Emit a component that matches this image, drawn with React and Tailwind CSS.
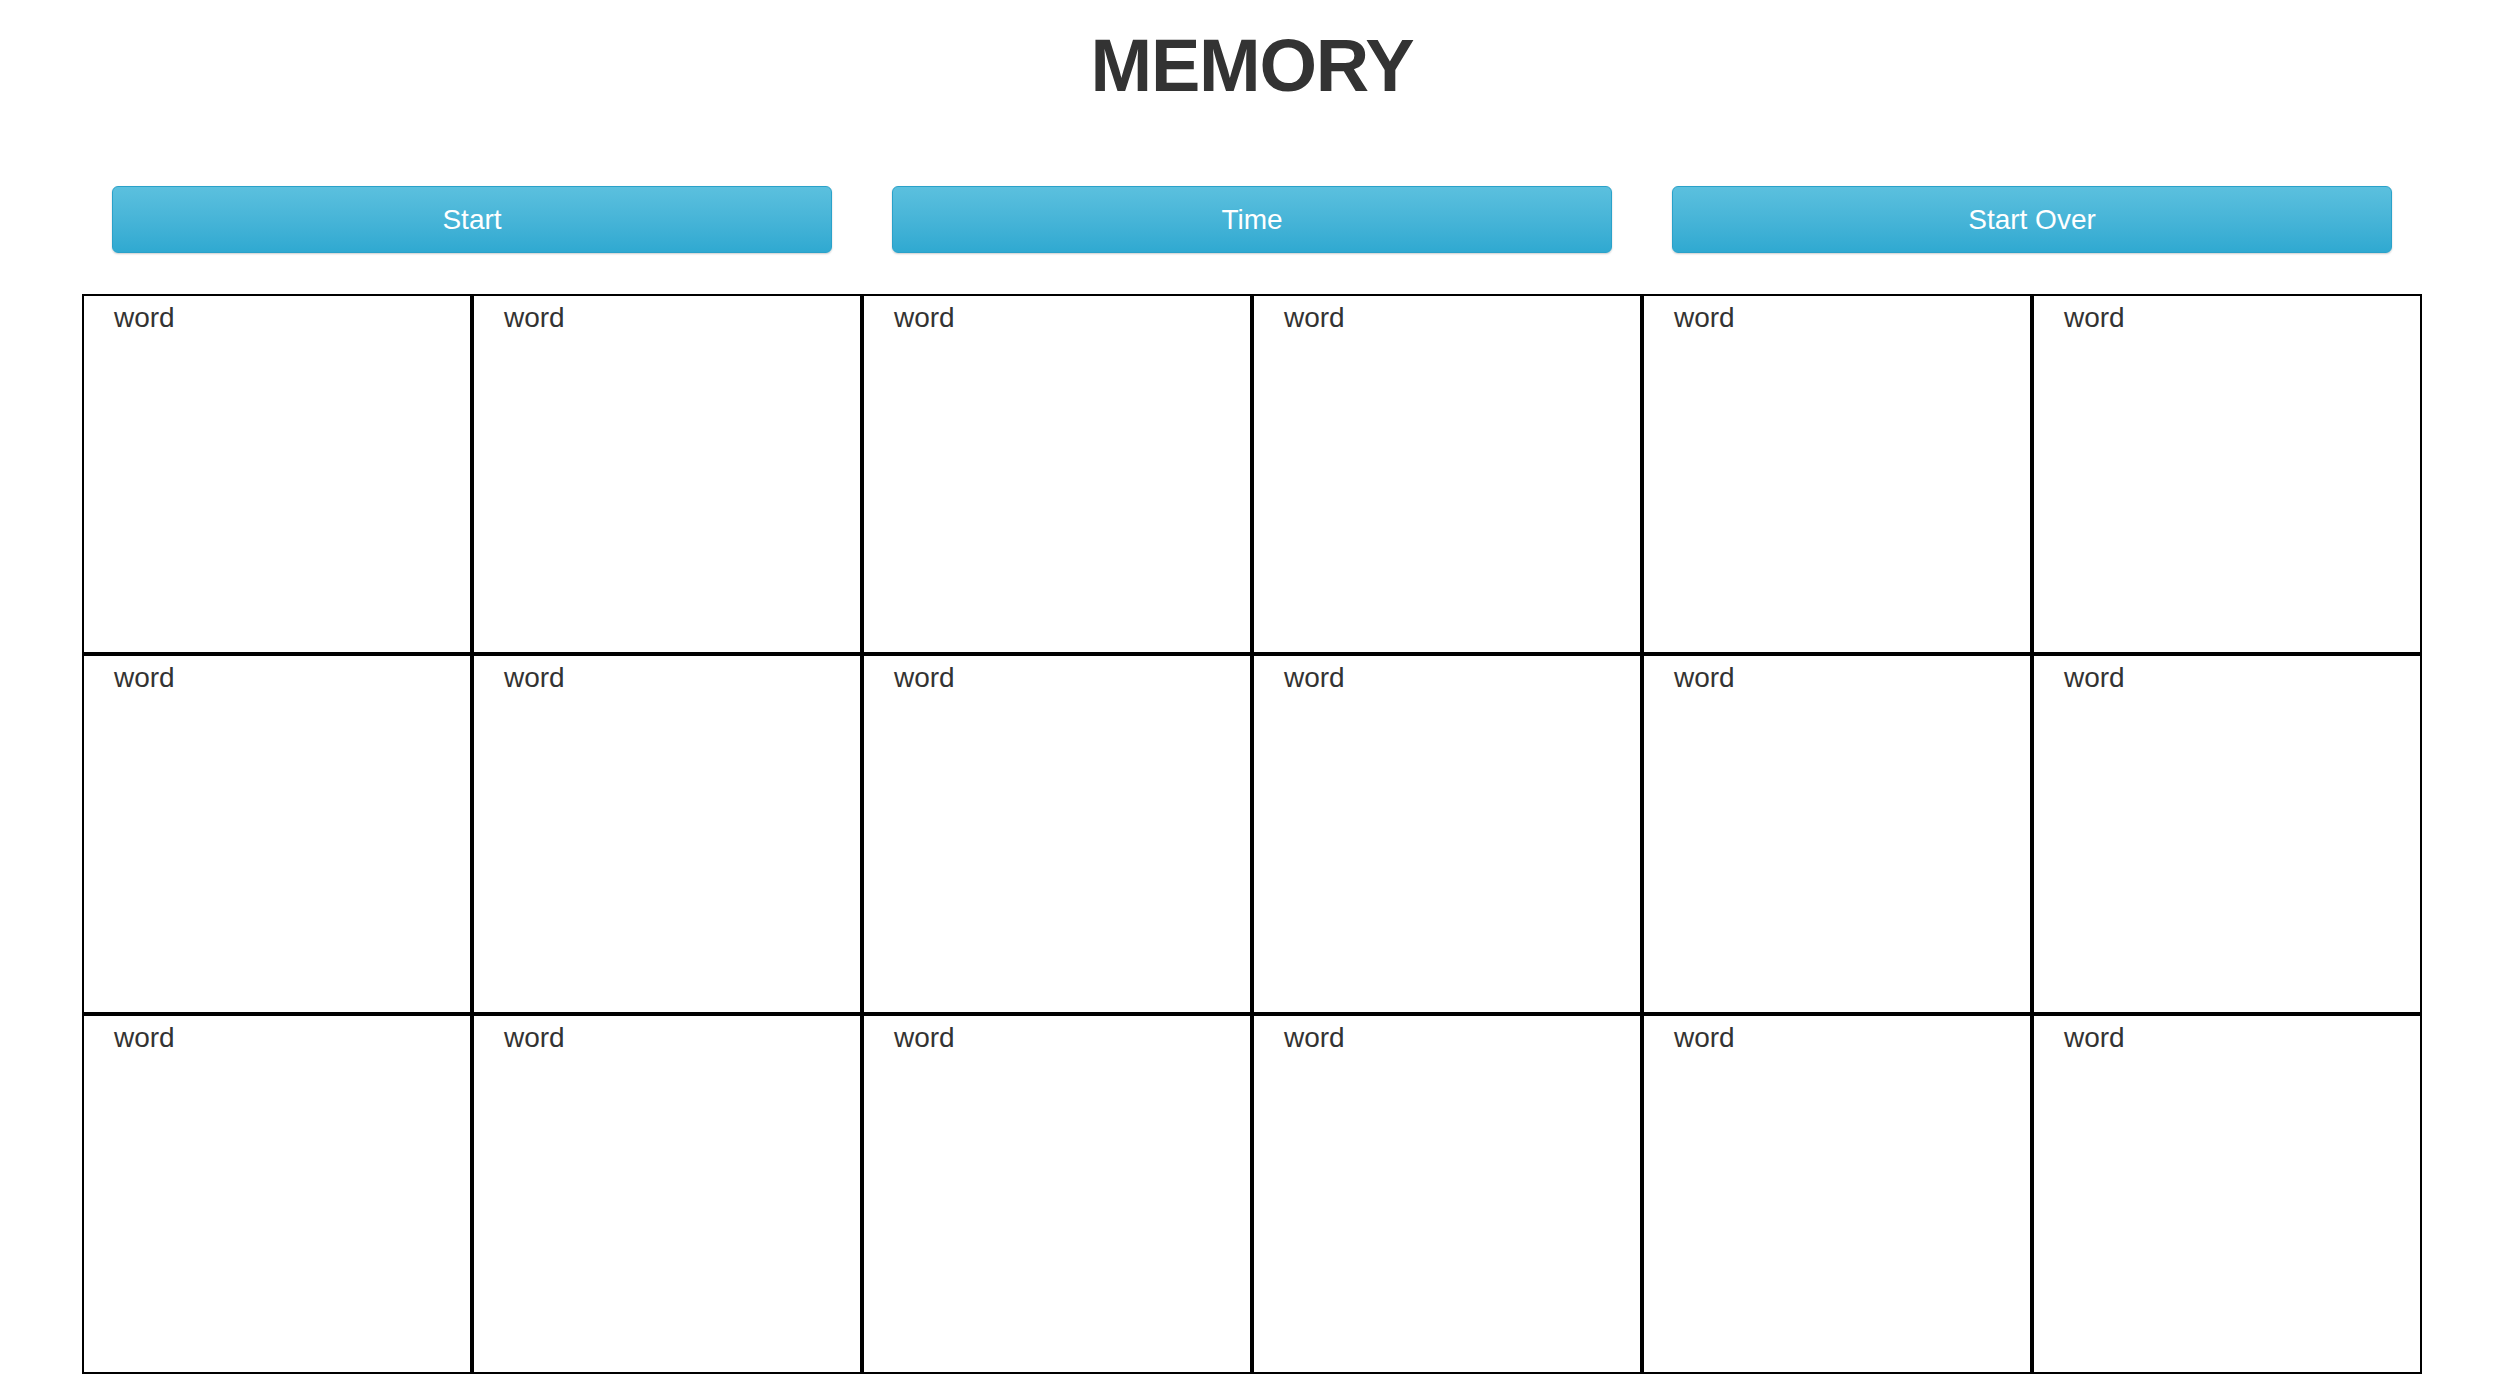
import React from 'react';

const buttons = ['Start', 'Time', 'Start Over'];

const cells = Array.from({ length: 18 }, (_, i) => ({ id: i, text: 'word' }));

const App = () => {
  return (
    <div className="min-h-screen bg-white text-[#333] font-['Helvetica_Neue','Liberation_Sans',Arial,sans-serif]">
      <div className="w-[2340px] ml-[82px]">
        {/* Title */}
        <h1 className="mt-[26px] h-[80px] leading-[80px] text-center text-[74px] font-bold tracking-[-1.2px]">
          MEMORY
        </h1>

        {/* Controls */}
        <div className="grid grid-cols-3 mt-[80px]">
          {buttons.map((label) => (
            <div key={label} className="px-[30px]">
              <button className="w-full h-[67px] rounded-[6px] border border-[#2aa1c9] bg-gradient-to-b from-[#5bc0de] to-[#2fa9d1] text-white text-[28px] leading-none shadow-[0_1px_2px_rgba(0,0,0,0.2)]">
                {label}
              </button>
            </div>
          ))}
        </div>

        {/* Board */}
        <div className="grid grid-cols-6 mt-[41px]">
          {cells.map((cell) => (
            <div
              key={cell.id}
              className="h-[360px] border-2 border-black pl-[30px] pt-[2px] text-[28px] leading-[40px] text-[#333]"
            >
              {cell.text}
            </div>
          ))}
        </div>
      </div>
    </div>
  );
};

export default App;
